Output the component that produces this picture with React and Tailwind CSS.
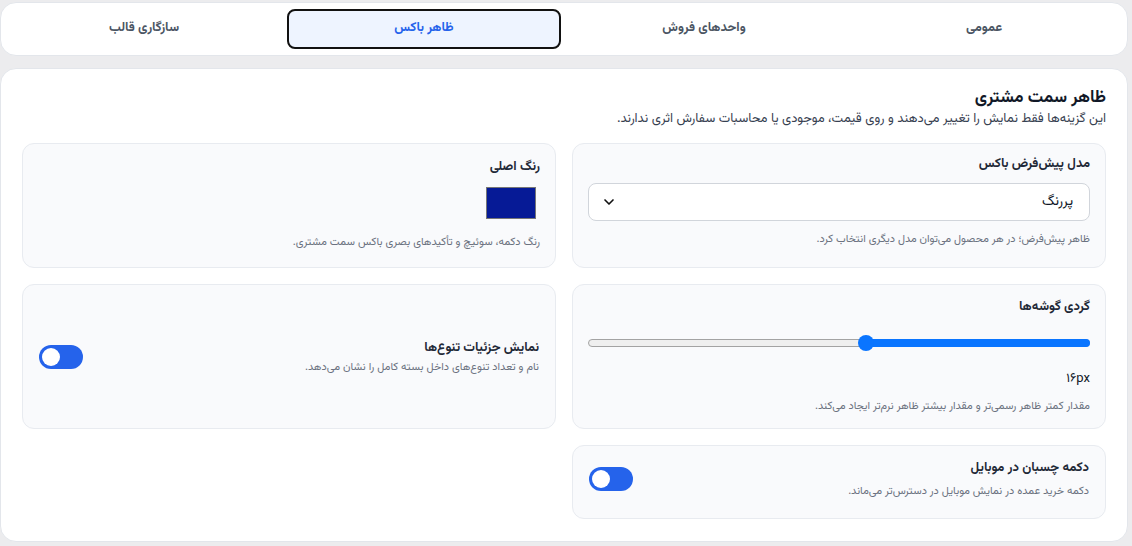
import React from "react";

const tabs = ["عمومی", "واحدهای فروش", "ظاهر باکس", "سازگاری قالب"];

const Toggle = () => (
  <div className="w-11 h-6 rounded-full bg-[#2563eb] flex items-center justify-end px-[3px] shrink-0">
    <div className="w-[18px] h-[18px] rounded-full bg-white" />
  </div>
);

const App = () => {
  return (
    <div
      dir="rtl"
      className="min-h-screen bg-[#ececee] pt-[2px] pr-1 pl-0"
      style={{ fontFamily: 'Vazirmatn, Tahoma, "DejaVu Sans", sans-serif' }}
    >
      {/* Tabs */}
      <div className="bg-white rounded-2xl border border-[#e3e6eb] p-1.5 grid grid-cols-4 gap-1.5">
        {tabs.map((t) => (
          <div
            key={t}
            className={
              t === "ظاهر باکس"
                ? "h-10 flex items-center justify-center rounded-lg border-2 border-[#111] bg-[#eef4ff] text-[13px] font-bold text-[#2563eb]"
                : "h-10 flex items-center justify-center text-[13px] font-bold text-[#4b5563]"
            }
          >
            {t}
          </div>
        ))}
      </div>

      {/* Panel */}
      <div className="mt-[12px] bg-white rounded-2xl border border-[#e3e6eb] px-[21px] pt-[18px] pb-[22px]">
        <h2 className="text-[17px] font-bold text-[#111827] leading-[22px]">ظاهر سمت مشتری</h2>
        <p className="mt-[2px] text-[13px] text-[#374151] leading-4">
          این گزینه‌ها فقط نمایش را تغییر می‌دهند و روی قیمت، موجودی یا محاسبات سفارش اثری ندارند.
        </p>

        <div className="grid grid-cols-2 gap-4 mt-4">
          {/* Default model */}
          <div className="bg-[#f9fafc] border border-[#e8ebf0] rounded-xl px-[15px] pt-[10px] pb-[17px]">
            <div className="text-[13px] font-bold text-[#1f2937] leading-5">مدل پیش‌فرض باکس</div>
            <div className="mt-[9px] h-[38px] bg-white border border-[#d1d5db] rounded-lg flex items-center justify-between pr-4 pl-3">
              <span className="text-[14px] text-[#111827]">پررنگ</span>
              <svg className="w-4 h-4 text-[#111]" fill="none" stroke="currentColor" strokeWidth={2.5} viewBox="0 0 24 24">
                <path strokeLinecap="round" strokeLinejoin="round" d="M6 9l6 6 6-6" />
              </svg>
            </div>
            <p className="mt-[11px] text-[11px] text-[#6b7280] leading-4">
              ظاهر پیش‌فرض؛ در هر محصول می‌توان مدل دیگری انتخاب کرد.
            </p>
          </div>

          {/* Main color */}
          <div className="bg-[#f9fafc] border border-[#e8ebf0] rounded-xl px-[15px] pt-[13px] pb-4">
            <div className="text-[13px] font-bold text-[#1f2937] leading-5">رنگ اصلی</div>
            <div className="mt-[10px] mr-1 w-[50px] h-[32px] bg-[#061a96] border border-[#767676]" />
            <p className="mt-[16px] text-[11px] text-[#6b7280] leading-4">
              رنگ دکمه، سوئیچ و تأکیدهای بصری باکس سمت مشتری.
            </p>
          </div>

          {/* Corner radius */}
          <div className="bg-[#f9fafc] border border-[#e8ebf0] rounded-xl px-[15px] pt-3 pb-[13px]">
            <div className="text-[13px] font-bold text-[#1f2937] leading-5">گردی گوشه‌ها</div>
            <div className="relative mt-[18px] h-4 flex items-center">
              <div className="w-full h-2 rounded-full bg-[#efefef] border border-[#a3a3a3]" />
              <div className="absolute right-0 top-1/2 -translate-y-1/2 h-2 rounded-full bg-[#0a75ff] w-[44.6%]" />
              <div className="absolute top-0 right-[44.6%] translate-x-1/2 w-4 h-4 rounded-full bg-[#0a75ff]" />
            </div>
            <div className="mt-[18px] text-[13px] text-[#111827] leading-5">۱۶px</div>
            <p className="mt-[10px] text-[11px] text-[#6b7280] leading-4">
              مقدار کمتر ظاهر رسمی‌تر و مقدار بیشتر ظاهر نرم‌تر ایجاد می‌کند.
            </p>
          </div>

          {/* Variants detail */}
          <div className="bg-[#f9fafc] border border-[#e8ebf0] rounded-xl px-4 flex items-center justify-between">
            <div>
              <div className="text-[13px] font-bold text-[#1f2937] leading-5">نمایش جزئیات تنوع‌ها</div>
              <p className="mt-0.5 text-[11px] text-[#6b7280] leading-4">
                نام و تعداد تنوع‌های داخل بسته کامل را نشان می‌دهد.
              </p>
            </div>
            <Toggle />
          </div>

          {/* Sticky mobile */}
          <div className="bg-[#f9fafc] border border-[#e8ebf0] rounded-xl px-4 pt-3 pb-[18px] flex items-center justify-between">
            <div>
              <div className="text-[13px] font-bold text-[#1f2937] leading-5">دکمه چسبان در موبایل</div>
              <p className="mt-1.5 text-[11px] text-[#6b7280] leading-4">
                دکمه خرید عمده در نمایش موبایل در دسترس‌تر می‌ماند.
              </p>
            </div>
            <Toggle />
          </div>
        </div>
      </div>
    </div>
  );
};

export default App;
